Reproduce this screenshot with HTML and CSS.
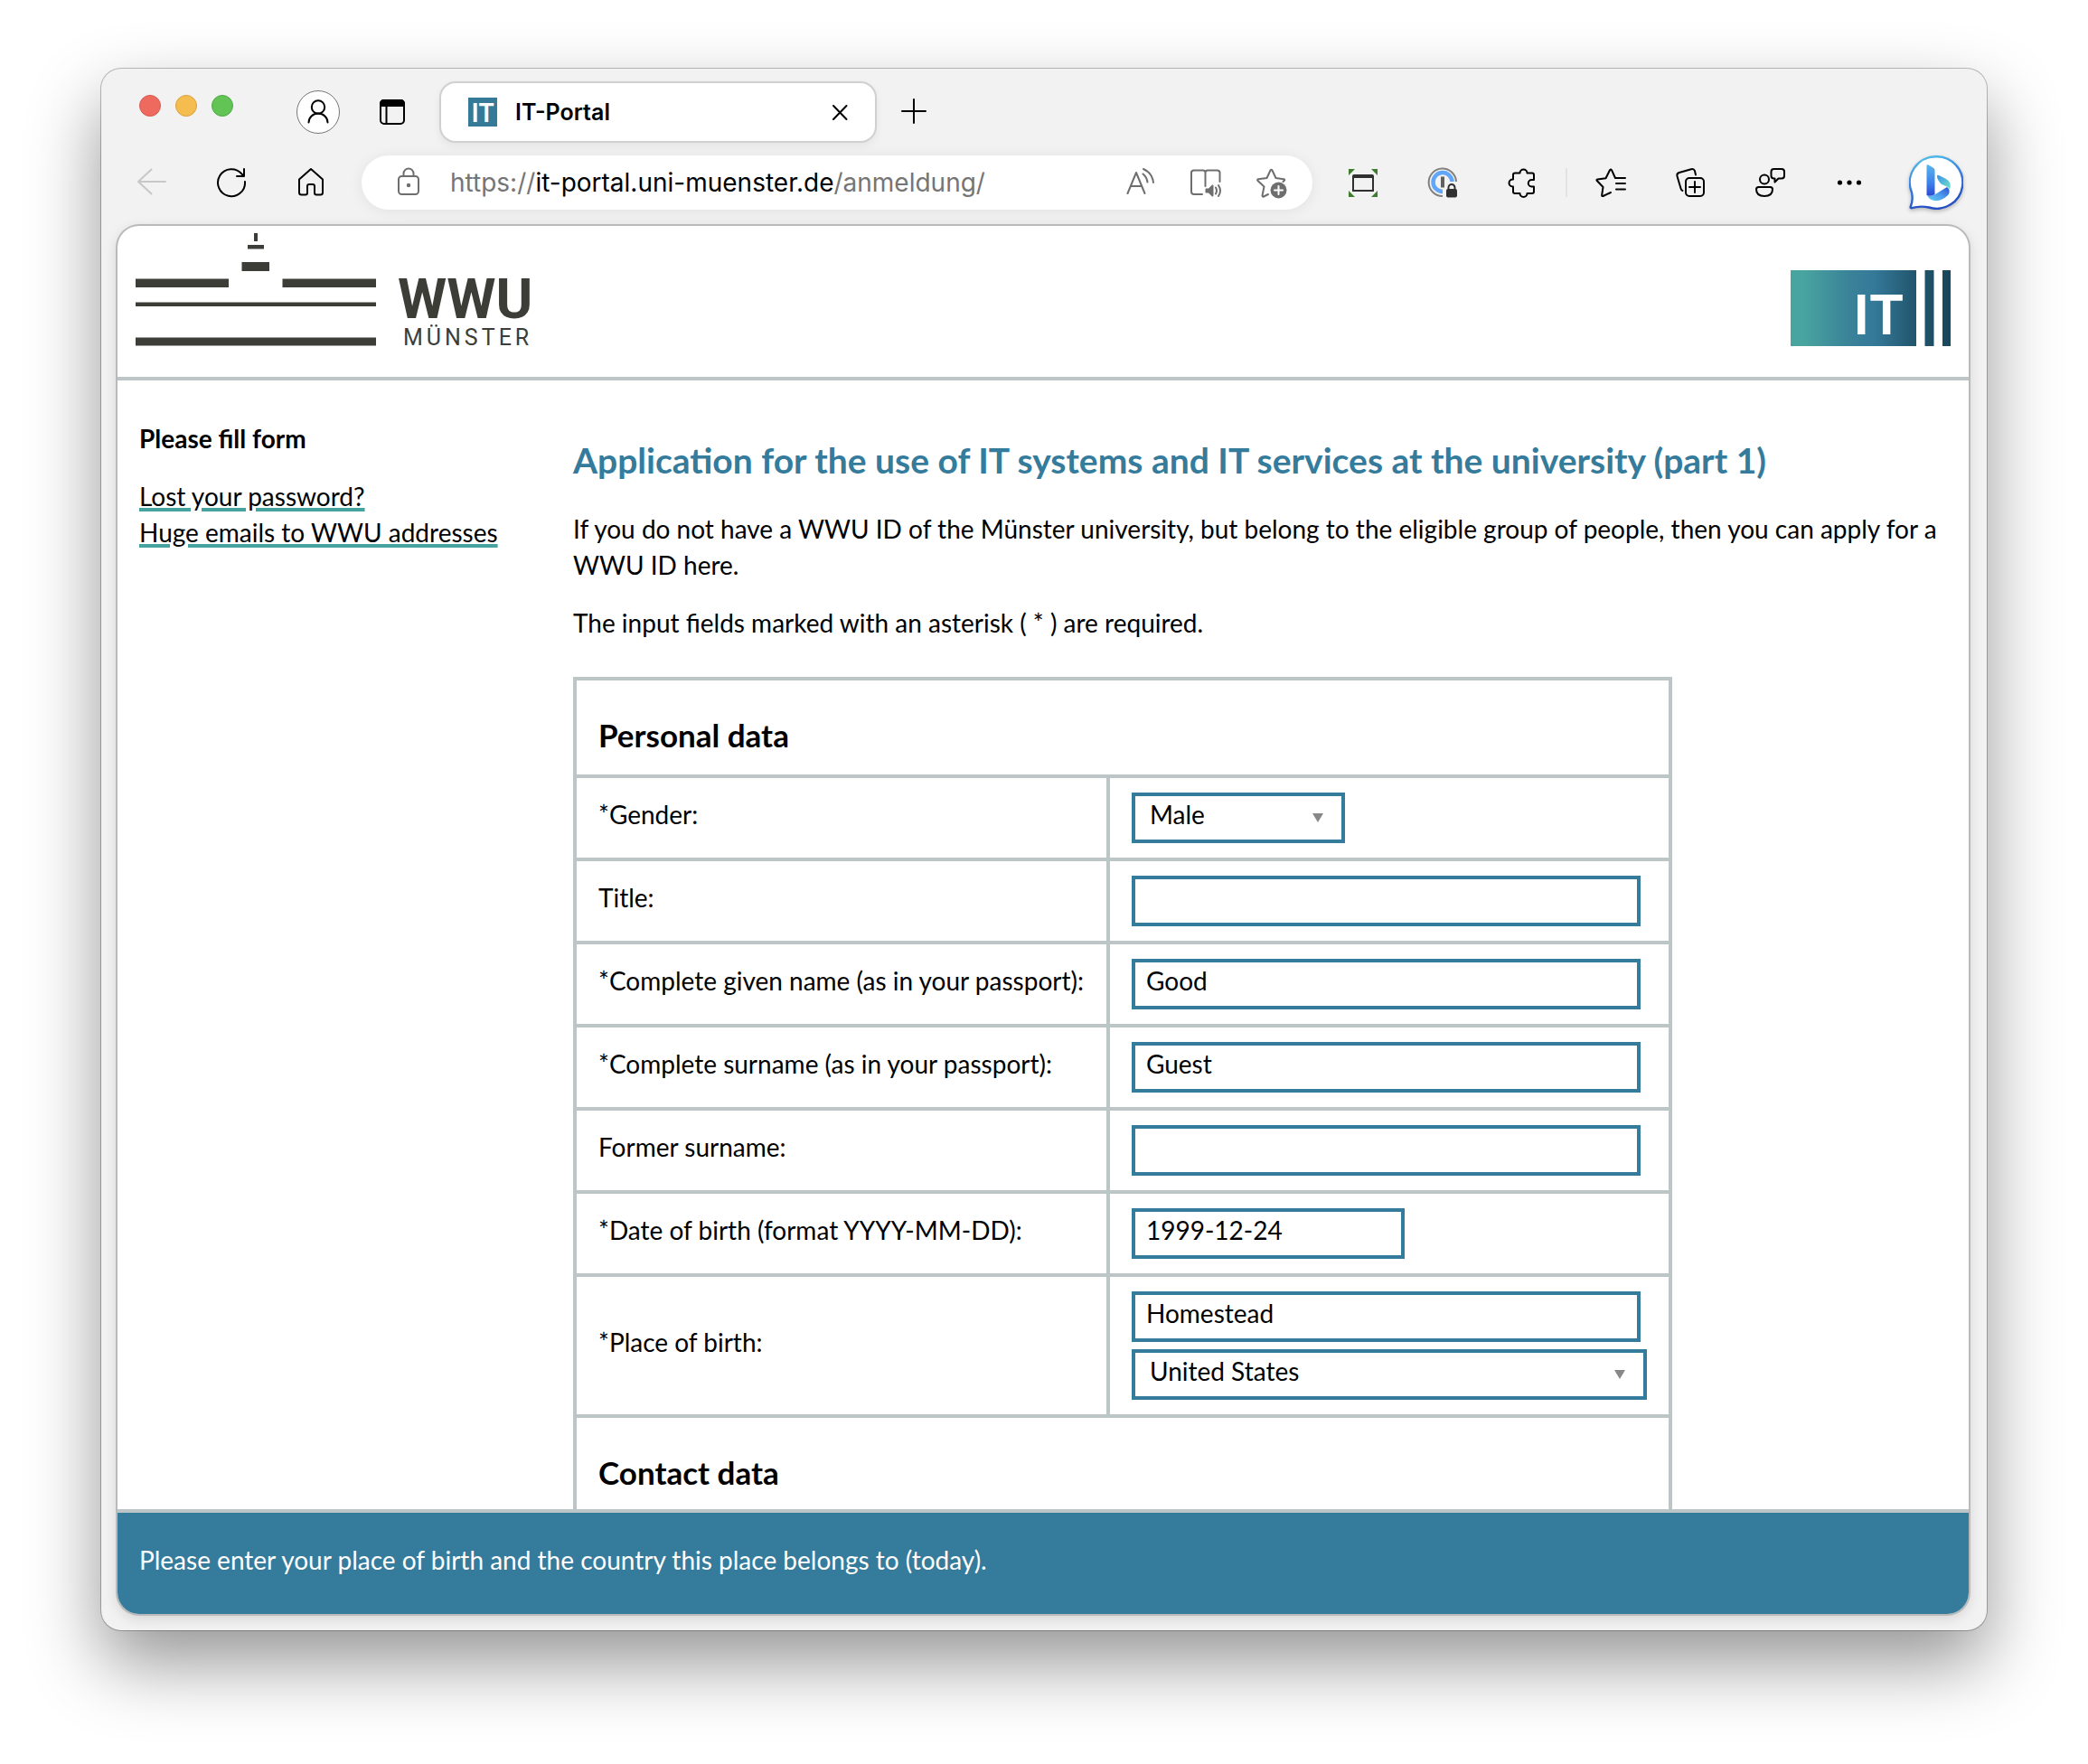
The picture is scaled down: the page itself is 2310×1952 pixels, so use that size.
FILE: index.html
```html
<!DOCTYPE html>
<html lang="en">
<head>
<meta charset="utf-8">
<title>IT-Portal</title>
<link rel="stylesheet" href="styles.css">
</head>
<body>
<div class="window">
  <div class="tabstrip">
    <div class="lights">
      <button class="light light-close" aria-label="Close window"></button>
      <button class="light light-min" aria-label="Minimize window"></button>
      <button class="light light-max" aria-label="Maximize window"></button>
    </div>
    <button class="profile" aria-label="Profile">
      <svg width="36" height="36" viewBox="0 0 36 36" class="line"><circle cx="18" cy="12.500" r="7.200"/><path d="M7.500 29.500a10.500 10 0 0 1 21 0"/></svg>
    </button>
    <button class="workspaces" aria-label="Tab actions">
      <svg width="36" height="36" viewBox="0 0 36 36" class="line"><rect x="5" y="5" width="26" height="26" rx="4"/><path d="M5 11V8.500A3.500 3.500 0 0 1 8.500 5h19A3.500 3.500 0 0 1 31 8.500V11z" fill="#000"/><path d="M11.500 11v20"/></svg>
    </button>
    <div class="tab">
      <span class="favicon">IT</span>
      <span class="tab-title">IT-Portal</span>
      <button class="tab-close" aria-label="Close tab">
        <svg width="36" height="36" viewBox="0 0 36 36" class="line"><path d="M10 11l14.500 15M24.500 11L10 26"/></svg>
      </button>
    </div>
    <button class="new-tab" aria-label="New tab">
      <svg width="36" height="36" viewBox="0 0 36 36" class="line"><path d="M17 4v26M4 17h26"/></svg>
    </button>
  </div>

  <div class="toolbar">
    <button class="tool" aria-label="Back">
      <svg width="36" height="36" viewBox="0 0 36 36" class="line pale"><path d="M33 17H3M17.500 3.500L3 17l14.500 13.500"/></svg>
    </button>
    <button class="tool" aria-label="Reload">
      <svg width="36" height="36" viewBox="0 0 36 36" class="line"><path d="M33 17A15 15 0 1 1 29.500 8.500l2 2M32 3v8h-8"/></svg>
    </button>
    <button class="tool" aria-label="Home">
      <svg width="36" height="36" viewBox="0 0 36 36" class="line"><path d="M18 3L5 14.500V29q0 2.500 2.500 2.500H12q2 0 2-2V22q0-2 2-2h4q2 0 2 2v7.500q0 2 2 2h4.500Q31 31.500 31 29V14.500z"/></svg>
    </button>
    <div class="address">
      <svg width="24" height="36" viewBox="0 0 24 36" class="line gray"><rect x="1" y="11" width="22" height="20" rx="3.500"/><path d="M6.500 11V8a5.500 5.500 0 0 1 11 0v3"/><circle cx="12" cy="21" r="1.200" fill="#6e6e6e"/></svg>
      <span class="url">https://<b>it-portal.uni-muenster.de</b>/anmeldung/</span>
      <button class="action" aria-label="Read aloud">
        <svg width="36" height="36" viewBox="0 0 36 36" class="line gray"><path d="M3.500 30L13 7l9.500 23M7 22h12M20.500 8.500a14 14 0 0 1 5 9M21 3a19 19 0 0 1 11 15"/></svg>
      </button>
      <button class="action" aria-label="Immersive reader">
        <svg width="36" height="36" viewBox="0 0 36 36" class="line gray"><path d="M14 31H5q-3 0-3-3V7q0-2.500 3-2.500h10q2.500 0 2.500 2.500v15M17.500 7q0-2.500 2.500-2.500h10.500q3 0 3 2.500v10"/><path d="M18.500 25.500h3l4-4v11l-4-4h-3z" fill="#6e6e6e"/><path d="M29 23.500q2 3.500 0 7M32 21q4 6 0 12"/></svg>
      </button>
      <button class="action" aria-label="Add to favorites">
        <svg width="36" height="36" viewBox="0 0 36 36" class="line gray"><path d="M31.500 17l1.500-1.500q.7-1-.8-1.300l-8.700-1.200-4-8.500q-1-1.500-2 0l-4 8.500-9.500 1.300q-1.500.4-.5 1.700l7 6.500-2 10q0 1.500 1.500 1L15 31"/><circle cx="26.500" cy="26.500" r="9" fill="#6e6e6e" stroke="none"/><path d="M26.500 22v9M22 26.500h9" stroke="#fff"/></svg>
      </button>
    </div>
    <button class="tool" aria-label="Screenshot">
      <svg width="36" height="36" viewBox="0 0 36 36"><path d="M2 3h7L2 10zM34 3h-7l7 7zM2 34h7l-7-7zM34 34h-7l7-7z" fill="#3f7d2e"/><path d="M6 28V11q0-2 2-2h20q2 0 2 2v17zM8 13v13h20V13z" fill="#303030" fill-rule="evenodd"/></svg>
    </button>
    <button class="tool" aria-label="Password manager">
      <svg width="36" height="36" viewBox="0 0 36 36" fill="none"><path d="M18 33A15.200 15.200 0 1 1 33 17" stroke="#808080" stroke-width="2"/><path d="M18 28A10.500 10.500 0 1 1 28.500 17" stroke="#62a6f8" stroke-width="4.500"/><path d="M16 11.500h4v12h-4z" fill="#606060"/><rect x="22" y="25" width="12" height="9.500" rx="2" fill="#303030"/><path d="M24.500 26v-2.500a3.500 3.500 0 0 1 7 0V26" stroke="#303030" stroke-width="2"/></svg>
    </button>
    <button class="tool" aria-label="Extensions">
      <svg width="36" height="36" viewBox="0 0 36 36" class="line"><path d="M10 7.500h5.500a4 4 0 0 1 8 0H29q2 0 2 2V15h-2.500a3.500 3.500 0 0 0 0 7.500H31V28q0 2-2 2h-5.500a4 4 0 0 1-8 0H10q-2 0-2-2v-5.500H7.500a4 4 0 0 1 0-8H8V9.500q0-2 2-2z"/></svg>
    </button>
    <span class="divider"></span>
    <button class="tool" aria-label="Favorites">
      <svg width="36" height="36" viewBox="0 0 36 36" class="line"><path d="M18 29L9.500 33q-1.500.4-1.300-1.200L9.500 23l-6.700-7q-1-1.200.5-1.500l9.200-1.300 4.500-9q1-1.500 2 0l4 8.800H34M24 19h10M24 25.500h10"/></svg>
    </button>
    <button class="tool" aria-label="Collections">
      <svg width="36" height="36" viewBox="0 0 36 36" class="line"><rect x="13" y="13" width="20" height="20" rx="4"/><path d="M23 17v12M17 23h12M9.500 27q-1.500-.5-2-2.500L3.500 11q-.8-3 2.200-4L19 3.200q3-.7 4 2L24 9.500"/></svg>
    </button>
    <button class="tool" aria-label="Feedback">
      <svg width="36" height="36" viewBox="0 0 36 36" class="line"><circle cx="12" cy="14.500" r="5"/><path d="M5.500 23h13q2.500 0 2.500 2.500 0 7.500-9 7.500t-9-7.500Q3 23 5.500 23zM22.500 3h8.500q3 0 3 3v4.500q0 3-3 3h-3.500l-4 4v-4h-1q-3 0-3-3V6q0-3 3-3z"/></svg>
    </button>
    <button class="tool" aria-label="More">
      <svg width="36" height="36" viewBox="0 0 36 36"><circle cx="7.500" cy="18" r="2.600"/><circle cx="18" cy="18" r="2.600"/><circle cx="28.500" cy="18" r="2.600"/></svg>
    </button>
    <button class="bing" aria-label="Bing Chat">
      <svg width="60" height="60" viewBox="0 0 60 60">
        <defs>
          <linearGradient id="ring" x1="0" y1="0" x2=".3" y2="1"><stop offset="0" stop-color="#55c8ea"/><stop offset=".5" stop-color="#3b82de"/><stop offset="1" stop-color="#2450c4"/></linearGradient>
          <linearGradient id="stem" x1="0" y1="0" x2="0" y2="1"><stop offset="0" stop-color="#58b4ef"/><stop offset=".6" stop-color="#3b80ea"/><stop offset="1" stop-color="#2a48d0"/></linearGradient>
          <linearGradient id="bowl" x1="0" y1="1" x2="1" y2="0"><stop offset="0" stop-color="#66caf5"/><stop offset=".5" stop-color="#4b9cec"/><stop offset="1" stop-color="#2a50d4"/></linearGradient>
          <linearGradient id="leaf" x1="0" y1="0" x2="1" y2="1"><stop offset="0" stop-color="#3a90e8"/><stop offset="1" stop-color="#72e6c4"/></linearGradient>
        </defs>
        <path d="M30 1.200A28.800 28.800 0 1 1 22 57.500Q12 55.500 3 58.200Q1 58.500 1.800 56.500Q4.800 49 3 41A28.800 28.800 0 0 1 30 1.200z" fill="#fff" stroke="url(#ring)" stroke-width="2.400"/>
        <path d="M20 44q4 2 9-1l13-8q5 4 1 9-7 7-15 6-6-1-8-6z" fill="url(#bowl)"/>
        <path d="M31 23q0-2 2-1l8 4q7 4 4 12-1-3-4-4l-5-2q-5-5-5-9z" fill="url(#leaf)"/>
        <path d="M19.500 11.500q0-2 2-1l5 3q2 1 2 3V43q-4 3-9 1z" fill="url(#stem)"/>
      </svg>
    </button>
  </div>

  <div class="page">
    <header class="site-header">
      <svg class="wwu" width="440" height="130" viewBox="0 0 440 130" role="img" aria-label="WWU Münster">
        <g fill="#3d3d38"><path d="M131 0h4v9h-4zM124 13h18v4.500h-18zM117.500 32h30.500v10h-30.500zM0 50.500h103v9.500H0zM162.500 50.500H266v9.500H162.500zM0 76.500h266v4.500H0zM0 115.500h266v9H0z"/>
        <text x="290" y="94" class="wwu-name">WWU</text>
        <text x="296" y="124" class="wwu-city">MÜNSTER</text></g>
      </svg>
      <svg class="it-logo" width="177" height="84" viewBox="0 0 177 84" role="img" aria-label="IT">
        <defs><linearGradient id="itg" gradientUnits="userSpaceOnUse" x1="0" y1="0" x2="177" y2="0"><stop offset="0" stop-color="#48a49f"/><stop offset=".08" stop-color="#48a49f"/><stop offset=".36" stop-color="#3a8398"/><stop offset=".52" stop-color="#357999"/><stop offset=".76" stop-color="#235870"/><stop offset="1" stop-color="#18465a"/></linearGradient></defs>
        <path d="M0 0h139v84H0zM148.500 0h10v84h-10zM168 0h9v84h-9z" fill="url(#itg)"/>
        <text x="69" y="71" class="it-name">IT</text>
      </svg>
    </header>
    <div class="columns">
      <nav class="sidebar">
        <p class="side-title">Please fill form</p>
        <ul class="side-links">
          <li><a href="#">Lost your password?</a></li>
          <li><a href="#">Huge emails to WWU addresses</a></li>
        </ul>
      </nav>
      <main class="content">
        <h1>Application for the use of IT systems and IT services at the university (part 1)</h1>
        <p>If you do not have a WWU ID of the Münster university, but belong to the eligible group of people, then you can apply for a WWU ID here.</p>
        <p>The input fields marked with an asterisk ( * ) are required.</p>
        <form>
          <table class="form-table">
            <tr><th colspan="2" scope="colgroup">Personal data</th></tr>
            <tr>
              <td class="label-cell"><label for="gender">*Gender:</label></td>
              <td class="field-cell"><span class="select select-short"><select id="gender"><option>Male</option><option>Female</option></select><svg width="12" height="10" viewBox="0 0 12 10"><path d="M0 0h12L6 10z" fill="#888"/></svg></span></td>
            </tr>
            <tr>
              <td class="label-cell"><label for="title">Title:</label></td>
              <td class="field-cell"><input id="title" type="text"></td>
            </tr>
            <tr>
              <td class="label-cell"><label for="given">*Complete given name (as in your passport):</label></td>
              <td class="field-cell"><input id="given" type="text" value="Good"></td>
            </tr>
            <tr>
              <td class="label-cell"><label for="surname">*Complete surname (as in your passport):</label></td>
              <td class="field-cell"><input id="surname" type="text" value="Guest"></td>
            </tr>
            <tr>
              <td class="label-cell"><label for="former">Former surname:</label></td>
              <td class="field-cell"><input id="former" type="text"></td>
            </tr>
            <tr>
              <td class="label-cell"><label for="birth">*Date of birth (format YYYY-MM-DD):</label></td>
              <td class="field-cell"><input id="birth" type="text" class="date" value="1999-12-24"></td>
            </tr>
            <tr>
              <td class="label-cell"><label for="place">*Place of birth:</label></td>
              <td class="field-cell">
                <div class="stack">
                  <input id="place" type="text" value="Homestead">
                  <span class="select select-long"><select aria-label="Country of birth"><option>United States</option><option>Germany</option></select><svg width="12" height="10" viewBox="0 0 12 10"><path d="M0 0h12L6 10z" fill="#888"/></svg></span>
                </div>
              </td>
            </tr>
            <tr><th colspan="2" scope="colgroup">Contact data</th></tr>
          </table>
        </form>
      </main>
    </div>
    <footer class="hint">Please enter your place of birth and the country this place belongs to (today).</footer>
  </div>
</div>
</body>
</html>
```
FILE: styles.css
```css
* { box-sizing: border-box; }

body {
  margin: 0;
  height: 100vh;
  padding: 76px 112px 148px;
  background: #fff;
  color: #000;
  font: 28px/40px Lato, "Liberation Sans", sans-serif;
}

button {
  display: flex;
  align-items: center;
  justify-content: center;
  padding: 0;
  border: 0;
  background: none;
}

svg { display: block; flex: none; }

.line { fill: none; stroke: #000; stroke-width: 2; stroke-linecap: round; stroke-linejoin: round; }
.gray { stroke: #6e6e6e; }
.pale { stroke: #c8c8c8; }

/* Browser window */
.window {
  display: flex;
  flex-direction: column;
  height: 100%;
  padding-bottom: 16px;
  border-radius: 22px;
  background: #f2f2f2;
  box-shadow: 0 0 0 1px rgba(0, 0, 0, .25), 0 36px 80px rgba(0, 0, 0, .42);
}

.tabstrip { display: flex; align-items: center; padding: 14px 24px 8px 42px; }

.lights { display: flex; gap: 16px; align-self: flex-start; margin-top: 15px; }
.light { width: 24px; height: 24px; border-radius: 50%; border: 1px solid; }
.light-close { background: #ee6a5f; border-color: #d65a50; }
.light-min { background: #f5bd4f; border-color: #d9a13e; }
.light-max { background: #61c455; border-color: #50a946; }

.profile { width: 48px; height: 48px; margin-left: 70px; border: 1px solid #777; border-radius: 50%; background: #fff; }
.workspaces { margin-left: 40px; }

.tab {
  display: flex;
  align-items: center;
  width: 484px;
  height: 68px;
  margin-left: 34px;
  padding: 0 20px 0 30px;
  border: 2px solid #d0d0d0;
  border-radius: 18px;
  background: #fff;
  box-shadow: 0 4px 10px rgba(0, 0, 0, .06);
}
.favicon { width: 32px; height: 32px; background: #357b97; color: #fff; font-size: 28px; line-height: 32px; font-weight: 700; text-align: center; }
.tab-title { flex: 1; margin-left: 20px; font: 600 25px/32px Inter, sans-serif; }
.new-tab { margin-left: 24px; }

.toolbar { display: flex; align-items: center; height: 72px; margin-bottom: 12px; padding: 0 26px 0 12px; }
.tool { width: 88px; height: 60px; }

.address {
  display: flex;
  flex: 1;
  align-items: center;
  height: 60px;
  margin: 0 12px;
  padding: 0 10px 0 40px;
  border-radius: 30px;
  background: #fff;
  box-shadow: 0 2px 16px rgba(0, 0, 0, .07);
}
.url { flex: 1; margin-left: 34px; color: #757575; font: 28px/40px Inter, sans-serif; white-space: nowrap; }
.url b { color: #000; font-weight: 400; }
.action { width: 72px; height: 60px; }
.divider { width: 2px; height: 32px; margin: 0 4px; background: #e2e2e2; }
.bing { margin-left: 22px; filter: drop-shadow(0 2px 2px rgba(0, 0, 0, .25)); }

/* Web page */
.page {
  display: flex;
  flex: 1;
  flex-direction: column;
  min-height: 0;
  margin: 0 20px 2px 18px;
  border-radius: 24px;
  overflow: hidden;
  background: #fff;
  box-shadow: 0 0 0 2px #bababa, 0 4px 16px rgba(0, 0, 0, .14);
}

.site-header {
  display: flex;
  justify-content: space-between;
  padding: 8px 20px 29px;
  border-bottom: 4px solid #bdc6c7;
}
.wwu-name { font: 700 62px Roboto, sans-serif; }
.wwu-city { font: 25px Roboto, sans-serif; letter-spacing: 4px; }
.it-logo { margin-top: 41px; }
.it-name { font: 700 62px Lato, sans-serif; fill: #fff; }

.columns { display: flex; flex: 1; min-height: 0; overflow: hidden; padding: 0 24px; }

.sidebar { flex: none; width: 480px; padding-top: 44px; }
.side-title { margin: 0 0 24px; font-weight: 700; }
.side-links { margin: 0; padding: 0; list-style: none; }
.side-links a { color: #000; text-decoration: underline #47a3a0 4px; text-underline-offset: 2px; }

.content { flex: 1; min-width: 0; padding-top: 64px; }
.content h1 { margin: 0 0 32px; color: #357b9b; font-size: 39px; line-height: 48px; }
.content p { margin: 0 0 24px; }

.form-table { width: 1216px; margin-top: 40px; border-collapse: collapse; }
.form-table th,
.form-table td { border: 4px solid #bdc6c7; }
.form-table th { padding: 40px 24px 24px; font-size: 35px; line-height: 40px; text-align: left; }
.label-cell { width: 590px; padding: 0 24px 8px; white-space: nowrap; }
.field-cell { padding: 16px 24px; }

.form-table input,
.form-table select {
  display: block;
  height: 56px;
  border: 4px solid #357b9b;
  border-radius: 0;
  outline: 0;
  background: #fff;
  color: #000;
  font: inherit;
  appearance: none;
}
.form-table input { width: 563px; padding: 0 12px 8px; }
.form-table .date { width: 302px; }

.stack { display: grid; gap: 8px; }
.select { display: grid; align-items: center; }
.select > * { grid-area: 1 / 1; }
.select svg { justify-self: end; margin-right: 24px; pointer-events: none; }
.form-table select { width: 100%; padding: 0 16px 8px; }
.select-short { width: 236px; }
.select-long { width: 570px; }

.hint {
  flex: none;
  padding: 32px 24px 40px;
  border-top: 4px solid #bdc6c7;
  background: #357b9b;
  color: #fff;
}
```
